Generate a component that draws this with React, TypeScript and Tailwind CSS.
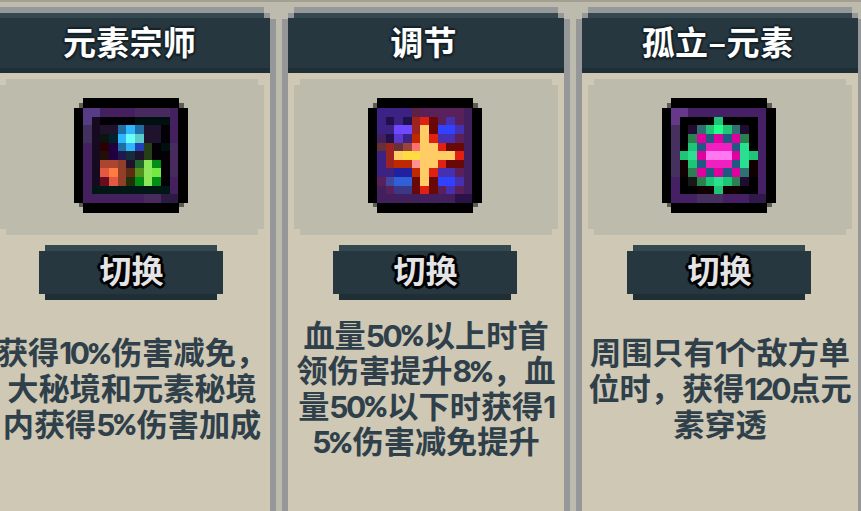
interface Talent {
  name: string;
  lines: string[];
  palette: Record<string, string>;
  pixels: string[];
}

const talents: Talent[] = [
  {
    name: "元素宗师",
    lines: ["获得10%伤害减免，", "大秘境和元素秘境", "内获得5%伤害加成"],
    palette: {
      p: "#45205f", q: "#482a5e", l: "#563b86", m: "#42305f", d: "#2c1a42",
      k: "#030006", t: "#000f10", n: "#160a20", v: "#1f122c", b: "#1f6fa5",
      c: "#30b6ff", w: "#6afff5", x: "#5acdc8", u: "#2240b4", g: "#0c1410",
      h: "#00222c", r: "#2a0000", i: "#210042", o: "#273f17", j: "#201008",
      y: "#211850", z: "#172c3a", R: "#aa4630", S: "#e35841", T: "#ff7b42",
      U: "#923f29", V: "#5e2c11", W: "#680c20", G: "#8ee85c", H: "#008e16",
      I: "#20682c", J: "#52921c", K: "#72ea42", L: "#203009", M: "#001815",
    },
    pixels: [
      "llppppqqqqp",
      "lnkkkkttttp",
      "mnvvbcbvvkp",
      "mnghcwxvvkp",
      "pnribcuoktq",
      "pnjiyzvokkq",
      "pnRRUvIGHkq",
      "pnSTUVJGKkq",
      "pnWSULHGHkp",
      "pMMMMMMMMMp",
      "pppppppqqdd",
    ],
  },
  {
    name: "调节",
    lines: ["血量50%以上时首", "领伤害提升8%，血", "量50%以下时获得1", "5%伤害减免提升"],
    palette: {
      b: "#3c2383", p: "#42205e", q: "#592059", m: "#602040", n: "#21104a",
      r: "#9c2420", R: "#e02010", d: "#680808", u: "#4430b0", U: "#3042ff",
      v: "#7048ff", w: "#5a38d0", y: "#ffcc66", Y: "#ffdc42", k: "#ff7070",
      K: "#ff9291", o: "#c02800", e: "#663038", f: "#9a423d", i: "#2020a0",
      j: "#4048a0", g: "#3060d8", h: "#3c3888", s: "#2a1248",
    },
    pixels: [
      "bbbbmqqqqqp",
      "bnbnrRdquqp",
      "bbvvrydUUup",
      "pnwboyRuuqp",
      "erefkyyRddp",
      "bryYYyyyyRp",
      "brooKyyRddp",
      "bbiioyRuuqp",
      "qjggdydUUup",
      "pqhhdRdquqp",
      "pppppppppss",
    ],
  },
  {
    name: "孤立–元素",
    lines: ["周围只有1个敌方单", "位时，获得120点元", "素穿透"],
    palette: {
      p: "#452064", l: "#65388a", m: "#463060", d: "#30184a", k: "#000000",
      r: "#100000", n: "#200c30", g: "#20c477", G: "#20ff88", h: "#2a8050",
      t: "#307070", T: "#28e090", b: "#205880", i: "#e000a0", I: "#f020c0",
      P: "#ff78f0", c: "#181818",
    },
    pixels: [
      "llppppppppp",
      "lkkkkgkkkkp",
      "mkntgGgtnkp",
      "mkhibibihkp",
      "mkgbIIIbTkp",
      "mgTiPPPiTgp",
      "mrgbIIIbTrp",
      "mrhibibitrp",
      "pkchgTghnkp",
      "pkkrrgrrkkp",
      "pppmmmpppdd",
    ],
  },
];

function PixelIcon({ talent }: Readonly<{ talent: Talent }>) {
  return (
    <svg width="116" height="117" viewBox="0 0 116 117" shapeRendering="crispEdges">
      <path d="M5 6H110V110H5Z" fill="#5d5d56" />
      <path d="M9 1H105V116H9ZM0 11H114V106H0Z" fill="#000" />
      {talent.pixels.map((row, y) =>
        row.split("").map((key, x) => (
          <rect
            key={`${x}-${y}`}
            x={9 + x * 8.66}
            y={11 + y * 8.63}
            width="8.7"
            height="8.7"
            fill={talent.palette[key]}
          />
        ))
      )}
    </svg>
  );
}

function Line({ text }: Readonly<{ text: string }>) {
  return (
    <p className="flex h-[35.6px] items-center whitespace-nowrap leading-[32px]">
      {text.split(/([0-9]+|%)/).map((part, index) => {
        if (part === "%") {
          return (
            <span key={index} className="pt-[3px] font-['Lato'] text-[28px] font-extrabold leading-[28px]">
              %
            </span>
          );
        }
        if (/[0-9]/.test(part)) {
          return (
            <span key={index} className="pt-1 font-['Inter'] text-[30px] font-bold leading-[28px] tracking-[-2.4px]">
              {part}
            </span>
          );
        }
        return <span key={index}>{part}</span>;
      })}
    </p>
  );
}

function Card({ talent }: Readonly<{ talent: Talent }>) {
  return (
    <section className="flex w-[288px] shrink-0 flex-col bg-[#969799] px-1.5 pt-1.5 [clip-path:polygon(0_12px,6px_12px,6px_6px,12px_6px,12px_0,276px_0,276px_6px,282px_6px,282px_12px,288px_12px,288px_100%,0_100%)]">
      <header className="flex h-[60px] items-center justify-center border-t-[5px] border-b-[5px] border-t-[#34494f] border-b-[#202e36] bg-[#26373f] [clip-path:polygon(0_5px,6px_5px,6px_0,270px_0,270px_5px,276px_5px,276px_100%,0_100%)]">
        <h2 className="pr-[5px] pb-[3px] text-[33px] leading-[47px] font-bold tracking-[0.3px] text-white [text-shadow:2px_0_1px_#17242a,-2px_0_1px_#17242a,0_2px_1px_#17242a,0_-2px_1px_#17242a,1px_2px_1px_#17242a,-1px_2px_1px_#17242a]">
          {talent.name}
        </h2>
      </header>
      <div className="flex grow flex-col items-center bg-[#cec8b5] pt-1.5">
        <div className="flex h-[156px] w-[264px] justify-center bg-[#bdbbac] pt-[18px] [clip-path:polygon(0_6px,6px_6px,6px_0,258px_0,258px_6px,264px_6px,264px_150px,258px_150px,258px_100%,6px_100%,6px_150px,0_150px)]">
          <PixelIcon talent={talent} />
        </div>
        <button className="mt-2.5 mr-0.5 flex h-[55px] w-[184px] items-center justify-center border-t-[6px] border-b-[6px] border-t-[#34494f] border-b-[#202e36] bg-[#26373f] text-[32px] font-bold text-[#e4e4e6] [clip-path:polygon(0_6px,6px_6px,6px_0,178px_0,178px_6px,184px_6px,184px_49px,178px_49px,178px_100%,6px_100%,6px_49px,0_49px)]">
          <span className="pb-1.5 pl-px leading-[43px] [text-shadow:2px_0_#000,-2px_0_#000,0_2px_#000,0_-2px_#000,2px_2px_#000,-2px_2px_#000,2px_-2px_#000,-2px_-2px_#000,3px_0_1px_#000,-3px_0_1px_#000,0_3px_1px_#000,0_-3px_1px_#000]">
            切换
          </span>
        </button>
        <div className="flex h-[174px] flex-col items-center justify-center text-[31.2px] font-bold text-[#2f404a]">
          {talent.lines.map((line) => (
            <Line key={line} text={line} />
          ))}
        </div>
      </div>
    </section>
  );
}

export default function App() {
  return (
    <main className="flex h-[511px] w-[861px] flex-col overflow-hidden border-t-2 border-[#a3a092] bg-[#bdbbad] pt-[5px] font-['Noto_Sans_CJK_SC',sans-serif]">
      <div className="-ml-3 flex grow gap-1.5">
        {talents.map((talent) => (
          <Card key={talent.name} talent={talent} />
        ))}
      </div>
    </main>
  );
}
